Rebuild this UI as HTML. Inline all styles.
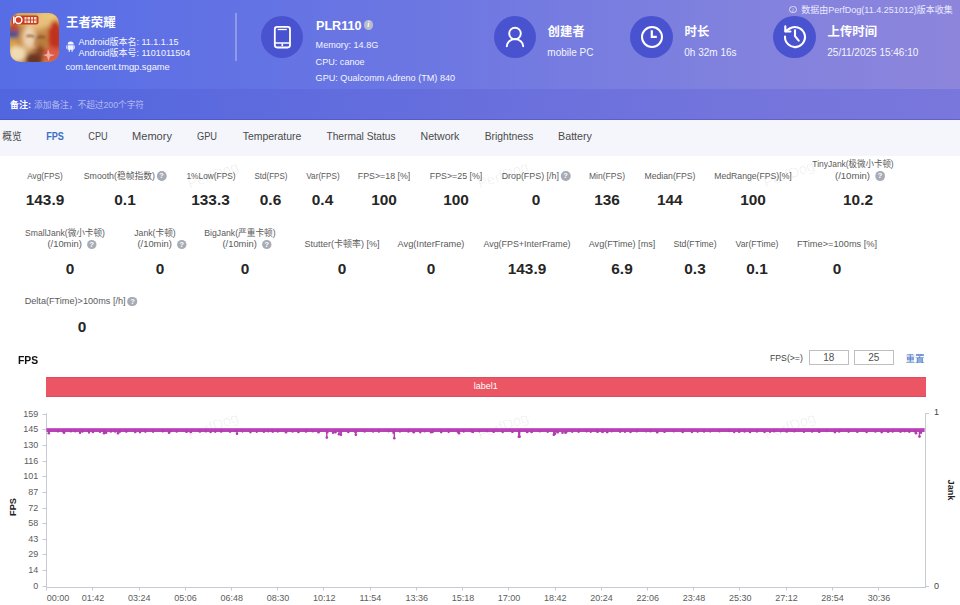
<!DOCTYPE html>
<html><head><meta charset="utf-8">
<style>
*{box-sizing:border-box;margin:0;padding:0}
html,body{width:960px;height:605px;overflow:hidden;background:#fff}
body{font-family:"Liberation Sans","Noto Sans CJK SC",sans-serif;position:relative;color:#333}
.abs{position:absolute;white-space:nowrap}
#hdr{position:absolute;left:0;top:0;width:960px;height:89px;background:linear-gradient(90deg,#566de6 0%,#6d77e2 45%,#8081de 75%,#8d85dc 100%)}
#note{position:absolute;left:0;top:89px;width:960px;height:30.5px;background:linear-gradient(90deg,#5166df 0%,#666edd 45%,#7374dc 75%,#7977dc 100%);box-shadow:inset 0 -1px 0 rgba(60,60,170,.35)}
#tabs{position:absolute;left:0;top:119.5px;width:960px;height:36.9px;background:#f5f6fb}
.t13{position:absolute;white-space:nowrap;font-size:12.4px;font-weight:bold;color:#fff;line-height:14px}
.s{position:absolute;white-space:nowrap;font-size:9px;color:#f5f6ff;line-height:10px}
.s10{position:absolute;white-space:nowrap;font-size:10px;color:#f4f5ff;line-height:11px}
.circ{position:absolute;width:42.6px;height:42.6px;border-radius:50%;background:#4a53cf;top:15.6px}
.tab{position:absolute;top:130px;font-size:10.5px;line-height:12px;color:#4a4a4a;white-space:nowrap;transform:translateX(-50%)}
.lab{position:absolute;font-size:9px;color:#5a5a5a;white-space:nowrap;transform:translateX(-50%);text-align:center;line-height:12px}
.val{position:absolute;font-size:15.4px;font-weight:bold;color:#262626;white-space:nowrap;transform:translateX(-50%);line-height:18px}
.q{display:inline-block;width:9.6px;height:9.6px;border-radius:50%;background:#a6abb5;color:#fff;font-size:7.5px;line-height:9.6px;text-align:center;font-weight:bold;vertical-align:0.5px;margin-left:2px}
.yl{position:absolute;font-size:9px;color:#5c5c5c;right:921.7px;white-space:nowrap;line-height:12px}
.xl{position:absolute;font-size:9px;color:#5c5c5c;top:592px;transform:translateX(-50%);white-space:nowrap;line-height:12px}
.inp{position:absolute;top:350px;width:39.5px;height:15px;border:1px solid #bfbfbf;background:#fff;font-size:10px;line-height:13.4px;text-align:center;color:#505050}
.wm{position:absolute;font-size:14.5px;line-height:16px;color:rgba(0,0,0,.065);white-space:nowrap;transform:translate(-50%,-50%) rotate(-20deg)}
</style></head><body>
<div id="hdr"></div>
<div id="note"></div>
<div id="tabs"></div>
<!-- app icon -->
<svg class="abs" style="left:10.3px;top:13px" width="49" height="49" viewBox="0 0 49 49">
<defs>
<clipPath id="ic"><rect x="0" y="0" width="49" height="49" rx="10.5" ry="10.5"/></clipPath>
<filter id="bl" x="-20%" y="-20%" width="140%" height="140%"><feGaussianBlur stdDeviation="2.2"/></filter>
<filter id="b1" x="-20%" y="-20%" width="140%" height="140%"><feGaussianBlur stdDeviation="1.1"/></filter>
<filter id="bs" x="-20%" y="-20%" width="140%" height="140%"><feGaussianBlur stdDeviation="0.7"/></filter>
</defs>
<g clip-path="url(#ic)">
<rect width="49" height="49" fill="#c48a48"/>
<g filter="url(#bl)">
<rect x="-4" y="-4" width="57" height="16" fill="#d8a85c"/>
<ellipse cx="38" cy="6" rx="12" ry="8" fill="#ecc878"/>
<ellipse cx="3" cy="19" rx="6" ry="8" fill="#3a4f96"/><ellipse cx="3" cy="31" rx="5" ry="6" fill="#d8a040"/>
<ellipse cx="4" cy="14" rx="5" ry="5" fill="#b84a30"/>
<ellipse cx="45" cy="24" rx="7" ry="17" fill="#c0301f"/>
<ellipse cx="24" cy="27" rx="13" ry="17" fill="#d8a266"/>
<ellipse cx="19" cy="24" rx="6" ry="11" fill="#ecd2b0"/>
<ellipse cx="31" cy="28" rx="6" ry="10" fill="#b87c3c"/>
<ellipse cx="27" cy="9" rx="14" ry="6" fill="#e6c07a"/>
<ellipse cx="24" cy="46" rx="9" ry="7" fill="#6a3420"/>
<ellipse cx="7" cy="41" rx="9" ry="8" fill="#f0dcb4"/>
<ellipse cx="42" cy="42" rx="9" ry="8" fill="#dc5a44"/>
<ellipse cx="30" cy="38" rx="5" ry="5" fill="#8a4424"/>
</g>
<g filter="url(#bs)">
</g><g filter="url(#b1)">
<path d="M16.5 23.5 Q20.5 21.5 24 24 M27.5 25 Q31 22.8 35 24.5" stroke="#6a3c1c" stroke-width="1.6" fill="none" opacity="0.8"/>
<path d="M26.5 25 L25.2 32.5" stroke="#a06c3c" stroke-width="1.3" fill="none" opacity="0.7"/>
<path d="M21.5 37 Q26 38.6 30 36.6" stroke="#8a5030" stroke-width="1.2" fill="none" opacity="0.7"/>
</g><g filter="url(#bs)">
<rect x="1.5" y="2.5" width="27" height="9" rx="2" fill="#c63a22"/>
<circle cx="8.5" cy="7" r="3.4" fill="#d8381c" stroke="#fff" stroke-width="1.5"/>
<rect x="3" y="3.5" width="1.6" height="7" fill="#fff"/>
<path d="M14.5 4 H26.5 V10 H14.5Z" fill="#fbeedc" opacity="0.9"/>
<path d="M17 4 V10 M20.5 4 V10 M23.5 4 V10 M14.5 7 H26.5" stroke="#c63a22" stroke-width="0.9"/>
<path d="M38 36 L40 41 L45 42 L40 43.5 L38.5 48 L37 43.5 L33 42 L37 41Z" fill="#fff" opacity="0.5"/>
</g>
</g>
</svg>
<div class="t13" style="left:66px;top:15.6px">王者荣耀</div>
<!-- android icon -->
<svg class="abs" style="left:66px;top:41.4px" width="9.4" height="11.5" viewBox="0 0 9 11"><path d="M1.6 3.4 A2.9 2.9 0 0 1 7.4 3.4Z M1.6 4 H7.4 V8.3 H1.6Z M0.3 4.2 H1.1 V7.3 H0.3Z M7.9 4.2 H8.7 V7.3 H7.9Z M2.6 8.3 H3.7 V10.3 H2.6Z M5.3 8.3 H6.4 V10.3 H5.3Z" fill="#f0f2ff"/></svg>
<div class="s" style="left:78.5px;top:36.5px">Android版本名: 11.1.1.15</div>
<div class="s" style="left:78.5px;top:47.5px">Android版本号: 1101011504</div>
<div class="s" style="left:65.4px;top:62.3px;font-size:9.3px">com.tencent.tmgp.sgame</div>
<div class="abs" style="left:235px;top:13px;width:1.5px;height:48px;background:rgba(255,255,255,.28)"></div>
<!-- device -->
<div class="circ" style="left:260.7px"></div>
<svg class="abs" style="left:272px;top:24px" width="20" height="26" viewBox="0 0 20 26"><rect x="2.8" y="2.8" width="15.2" height="20.7" rx="2.4" fill="none" stroke="#fff" stroke-width="1.8"/><path d="M5.7 5.5 H14.8" stroke="#fff" stroke-width="1.3"/><path d="M2.8 19 H18" stroke="#fff" stroke-width="1.5"/><rect x="9.5" y="19.6" width="1.6" height="2.6" fill="#fff"/></svg>
<div class="t13" style="left:316px;top:18.5px;font-size:12.6px">PLR110</div>
<div class="abs" style="left:363.5px;top:20px;width:9.5px;height:9.5px;border-radius:50%;background:#b9bccb;color:#fff;font-size:8px;line-height:9.5px;text-align:center;font-style:italic;font-weight:bold;font-family:'Liberation Serif',serif">i</div>
<div class="s" style="left:315.6px;top:40px;font-size:9.1px">Memory: 14.8G</div>
<div class="s" style="left:315.6px;top:56.5px;font-size:9.1px">CPU: canoe</div>
<div class="s" style="left:315.6px;top:73.2px;font-size:9.1px">GPU: Qualcomm Adreno (TM) 840</div>
<!-- creator -->
<div class="circ" style="left:493.5px"></div>
<svg class="abs" style="left:502.8px;top:24px" width="24" height="26" viewBox="0 0 24 26"><circle cx="12" cy="9.5" r="5.8" fill="none" stroke="#fff" stroke-width="1.9"/><path d="M3.8 22.3 A8.2 7.2 0 0 1 20.2 22.3" fill="none" stroke="#fff" stroke-width="1.9" stroke-linecap="round"/></svg>
<div class="t13" style="left:547.6px;top:25px">创建者</div>
<div class="s10" style="left:547.3px;top:47px">mobile PC</div>
<!-- duration -->
<div class="circ" style="left:630.3px"></div>
<svg class="abs" style="left:639.7px;top:25.1px" width="24" height="24" viewBox="0 0 24 24"><circle cx="12" cy="12" r="10" fill="none" stroke="#fff" stroke-width="2"/><path d="M11.8 5.3 V11.8 H16.8" fill="none" stroke="#fff" stroke-width="2.2"/></svg>
<div class="t13" style="left:684.6px;top:25px">时长</div>
<div class="s10" style="left:684.3px;top:47px">0h 32m 16s</div>
<!-- upload -->
<div class="circ" style="left:773.3px"></div>
<svg class="abs" style="left:781.8px;top:24.2px" width="26" height="26" viewBox="0 0 26 26"><path d="M7.2 4.9 A10 10 0 1 1 3 12.6" fill="none" stroke="#fff" stroke-width="2.1" stroke-linecap="round"/><path d="M3.3 2.2 V7.5 H8.4" fill="none" stroke="#fff" stroke-width="2.1" stroke-linecap="round" stroke-linejoin="round"/><path d="M3.6 7.2 L7.4 4.6" fill="none" stroke="#fff" stroke-width="2.1" stroke-linecap="round"/><path d="M13 6.4 V12.2 L16.7 16.7" fill="none" stroke="#fff" stroke-width="2.1" stroke-linecap="round" stroke-linejoin="round"/></svg>
<div class="t13" style="left:827.6px;top:25px">上传时间</div>
<div class="s10" style="left:827.3px;top:47px">25/11/2025 15:46:10</div>
<!-- top right -->
<div class="abs" style="left:789px;top:5.5px;width:7.5px;height:7.5px;border-radius:50%;border:0.8px solid rgba(255,255,255,.7);color:rgba(255,255,255,.8);font-size:6px;line-height:6px;text-align:center;font-style:italic;font-family:'Liberation Serif',serif">i</div>
<div class="s" style="left:801.3px;top:4.6px;font-size:9px;color:#e9eaff">数据由PerfDog(11.4.251012)版本收集</div>
<!-- note -->
<div class="s" style="left:10px;top:100.2px;font-weight:bold;color:#fff">备注:</div>
<div class="s" style="left:34px;top:100.3px;font-size:8.7px;color:rgba(255,255,255,.55)">添加备注，不超过200个字符</div>
<div class="tab" style="left:11.5px;;transform:translateX(-50%) scaleX(0.919)">概览</div>
<div class="tab" style="left:54.7px;color:#3b6fc6;font-weight:bold;transform:translateX(-50%) scaleX(0.865)">FPS</div>
<div class="tab" style="left:97.7px;;transform:translateX(-50%) scaleX(0.877)">CPU</div>
<div class="tab" style="left:152.3px;;transform:translateX(-50%) scaleX(1.053)">Memory</div>
<div class="tab" style="left:206.8px;;transform:translateX(-50%) scaleX(0.883)">GPU</div>
<div class="tab" style="left:271.7px;;transform:translateX(-50%) scaleX(0.995)">Temperature</div>
<div class="tab" style="left:360.5px;;transform:translateX(-50%) scaleX(0.972)">Thermal Status</div>
<div class="tab" style="left:439.7px;;transform:translateX(-50%) scaleX(1.008)">Network</div>
<div class="tab" style="left:508.8px;;transform:translateX(-50%) scaleX(0.980)">Brightness</div>
<div class="tab" style="left:575px;;transform:translateX(-50%) scaleX(1.021)">Battery</div><div class="lab" style="left:45px;top:169.7px;transform:translateX(-50%) scaleX(0.915)">Avg(FPS)</div>
<div class="val" style="left:45px;top:191.4px">143.9</div>
<div class="lab" style="left:125px;top:169.7px;transform:translateX(-50%) scaleX(0.976)">Smooth(稳帧指数)<span class="q">?</span></div>
<div class="val" style="left:125px;top:191.4px">0.1</div>
<div class="lab" style="left:210.5px;top:169.7px;transform:translateX(-50%) scaleX(0.925)">1%Low(FPS)</div>
<div class="val" style="left:210.5px;top:191.4px">133.3</div>
<div class="lab" style="left:270.5px;top:169.7px;transform:translateX(-50%) scaleX(0.892)">Std(FPS)</div>
<div class="val" style="left:270.5px;top:191.4px">0.6</div>
<div class="lab" style="left:322.5px;top:169.7px;transform:translateX(-50%) scaleX(0.908)">Var(FPS)</div>
<div class="val" style="left:322.5px;top:191.4px">0.4</div>
<div class="lab" style="left:384px;top:169.7px;transform:translateX(-50%) scaleX(0.981)">FPS&gt;=18 [%]</div>
<div class="val" style="left:384px;top:191.4px">100</div>
<div class="lab" style="left:456px;top:169.7px;transform:translateX(-50%) scaleX(0.981)">FPS&gt;=25 [%]</div>
<div class="val" style="left:456px;top:191.4px">100</div>
<div class="lab" style="left:535.5px;top:169.7px;transform:translateX(-50%) scaleX(0.986)">Drop(FPS) [/h]<span class="q">?</span></div>
<div class="val" style="left:536px;top:191.4px">0</div>
<div class="lab" style="left:607px;top:169.7px;transform:translateX(-50%) scaleX(0.947)">Min(FPS)</div>
<div class="val" style="left:607px;top:191.4px">136</div>
<div class="lab" style="left:669.8px;top:169.7px;transform:translateX(-50%) scaleX(0.962)">Median(FPS)</div>
<div class="val" style="left:669.8px;top:191.4px">144</div>
<div class="lab" style="left:753px;top:169.7px;transform:translateX(-50%) scaleX(0.963)">MedRange(FPS)[%]</div>
<div class="val" style="left:753px;top:191.4px">100</div>
<div class="lab" style="left:853px;top:158px;transform:translateX(-50%) scaleX(0.939)">TinyJank(极微小卡顿)</div>
<div class="lab" style="left:860px;top:169.7px;transform:translateX(-50%) scaleX(1.064)">(/10min) <span class="q">?</span></div>
<div class="val" style="left:858px;top:191.4px">10.2</div>
<div class="lab" style="left:65px;top:226.7px;transform:translateX(-50%) scaleX(0.956)">SmallJank(微小卡顿)</div>
<div class="lab" style="left:72px;top:238px;transform:translateX(-50%) scaleX(1.043)">(/10min) <span class="q">?</span></div>
<div class="val" style="left:70px;top:260.4px">0</div>
<div class="lab" style="left:155px;top:226.7px;transform:translateX(-50%) scaleX(0.963)">Jank(卡顿)</div>
<div class="lab" style="left:161.7px;top:238px;transform:translateX(-50%) scaleX(1.043)">(/10min) <span class="q">?</span></div>
<div class="val" style="left:160px;top:260.4px">0</div>
<div class="lab" style="left:240px;top:226.7px;transform:translateX(-50%) scaleX(0.964)">BigJank(严重卡顿)</div>
<div class="lab" style="left:246.7px;top:238px;transform:translateX(-50%) scaleX(1.043)">(/10min) <span class="q">?</span></div>
<div class="val" style="left:245px;top:260.4px">0</div>
<div class="lab" style="left:342px;top:238px;transform:translateX(-50%) scaleX(1.000)">Stutter(卡顿率) [%]</div>
<div class="val" style="left:342px;top:260.4px">0</div>
<div class="lab" style="left:431px;top:238px;transform:translateX(-50%) scaleX(1.023)">Avg(InterFrame)</div>
<div class="val" style="left:431px;top:260.4px">0</div>
<div class="lab" style="left:527px;top:238px;transform:translateX(-50%) scaleX(0.989)">Avg(FPS+InterFrame)</div>
<div class="val" style="left:527px;top:260.4px">143.9</div>
<div class="lab" style="left:622px;top:238px;transform:translateX(-50%) scaleX(1.008)">Avg(FTime) [ms]</div>
<div class="val" style="left:622px;top:260.4px">6.9</div>
<div class="lab" style="left:695px;top:238px;transform:translateX(-50%) scaleX(0.967)">Std(FTime)</div>
<div class="val" style="left:695px;top:260.4px">0.3</div>
<div class="lab" style="left:757px;top:238px;transform:translateX(-50%) scaleX(0.967)">Var(FTime)</div>
<div class="val" style="left:757px;top:260.4px">0.1</div>
<div class="lab" style="left:837px;top:238px;transform:translateX(-50%) scaleX(1.026)">FTime&gt;=100ms [%]</div>
<div class="val" style="left:837px;top:260.4px">0</div>
<div class="lab" style="left:81.3px;top:295.3px;transform:translateX(-50%) scaleX(1.015)">Delta(FTime)&gt;100ms [/h]<span class="q">?</span></div>
<div class="val" style="left:82px;top:318.09999999999997px">0</div><div class="wm" style="left:213px;top:175px">PerfDog</div><div class="wm" style="left:503px;top:175px">PerfDog</div><div class="wm" style="left:789px;top:174px">PerfDog</div><div class="wm" style="left:213px;top:426px">PerfDog</div><div class="wm" style="left:503px;top:426px">PerfDog</div><div class="wm" style="left:790px;top:426px">PerfDog</div>
<div class="abs" style="left:17.8px;top:354.4px;font-size:11.5px;line-height:12px;font-weight:bold;color:#111;transform:scaleX(.9);transform-origin:0 0">FPS</div>
<div class="abs" style="left:770px;top:352.5px;font-size:8.7px;line-height:11px;color:#444">FPS(&gt;=)</div>
<div class="inp" style="left:809px">18</div>
<div class="inp" style="left:854px">25</div>
<div class="abs" style="left:905.5px;top:352.5px;font-size:9.5px;line-height:11px;color:#3b6fc6">重置</div>
<div class="abs" style="left:46px;top:377.4px;width:879.5px;height:19.2px;background:#eb5564;box-shadow:inset 0 1px 0 rgba(200,70,90,.45),inset 0 -1px 0 rgba(200,70,90,.45);color:#fff;font-size:9px;line-height:19px;text-align:center">label1</div>
<div class="abs" style="left:8.3px;top:502px;font-size:9.2px;font-weight:bold;color:#222;line-height:10px;transform:rotate(-90deg);transform-origin:center;width:20px;text-align:center;margin-left:-5px">FPS</div>
<div class="abs" style="left:938.7px;top:485.2px;font-size:9.2px;font-weight:bold;color:#222;line-height:10px;transform:rotate(90deg);transform-origin:center;width:24px;text-align:center">Jank</div>
<div class="abs" style="left:934px;top:406px;font-size:9px;line-height:12px;color:#444">1</div>
<div class="abs" style="left:934px;top:579.5px;font-size:9px;line-height:12px;color:#444">0</div>
<svg class="abs" style="left:0;top:0" width="960" height="605" viewBox="0 0 960 605">
<path d="M46.5 413 V587.5 M46 587.5 H926 M925.5 413 V587.5 M925.5 413.5 H929 M925.5 586.5 H929 M42.5 414.5 H46 M42.5 429.5 H46 M42.5 445.5 H46 M42.5 461.5 H46 M42.5 476.5 H46 M42.5 492.5 H46 M42.5 508.5 H46 M42.5 523.5 H46 M42.5 539.5 H46 M42.5 554.5 H46 M42.5 570.5 H46 M42.5 586.5 H46 M46.5 587 V590.5 M92.5 587 V590.5 M139.5 587 V590.5 M185.5 587 V590.5 M231.5 587 V590.5 M277.5 587 V590.5 M323.5 587 V590.5 M370.5 587 V590.5 M416.5 587 V590.5 M462.5 587 V590.5 M508.5 587 V590.5 M555.5 587 V590.5 M601.5 587 V590.5 M647.5 587 V590.5 M693.5 587 V590.5 M739.5 587 V590.5 M786.5 587 V590.5 M832.5 587 V590.5 M878.5 587 V590.5 " stroke="#c6cad3" stroke-width="1" fill="none"/>
</svg>
<div class="yl" style="top:407.6px">159</div>
<div class="yl" style="top:423.3px">145</div>
<div class="yl" style="top:438.9px">130</div>
<div class="yl" style="top:454.6px">116</div>
<div class="yl" style="top:470.2px">101</div>
<div class="yl" style="top:485.8px">87</div>
<div class="yl" style="top:501.5px">72</div>
<div class="yl" style="top:517.1px">58</div>
<div class="yl" style="top:532.7px">43</div>
<div class="yl" style="top:548.4px">29</div>
<div class="yl" style="top:564.0px">14</div>
<div class="yl" style="top:579.6px">0</div>
<div class="xl" style="left:58.1px">00:00</div>
<div class="xl" style="left:93.1px">01:42</div>
<div class="xl" style="left:139.3px">03:24</div>
<div class="xl" style="left:185.6px">05:06</div>
<div class="xl" style="left:231.8px">06:48</div>
<div class="xl" style="left:278.0px">08:30</div>
<div class="xl" style="left:324.2px">10:12</div>
<div class="xl" style="left:370.4px">11:54</div>
<div class="xl" style="left:416.7px">13:36</div>
<div class="xl" style="left:462.9px">15:18</div>
<div class="xl" style="left:509.1px">17:00</div>
<div class="xl" style="left:555.3px">18:42</div>
<div class="xl" style="left:601.5px">20:24</div>
<div class="xl" style="left:647.8px">22:06</div>
<div class="xl" style="left:694.0px">23:48</div>
<div class="xl" style="left:740.2px">25:30</div>
<div class="xl" style="left:786.4px">27:12</div>
<div class="xl" style="left:832.6px">28:54</div>
<div class="xl" style="left:878.9px">30:36</div><svg class="abs" style="left:0;top:0" width="960" height="605" viewBox="0 0 960 605">
<path d="M46.5 430.1 H924.6" stroke="#b842b5" stroke-width="3.7" fill="none"/>
<path d="M46.5 428.5 H924.6" stroke="#c75ac3" stroke-width="0.8" fill="none"/>
<path d="M48.8 430.0 V433.7 M104.0 430.0 V433.7 M118.0 430.0 V433.7 M237.0 430.0 V434.2 M326.8 430.0 V438.0 M339.0 430.0 V434.7 M341.0 430.0 V435.2 M355.8 430.0 V435.2 M394.3 430.0 V438.7 M459.0 430.0 V433.7 M518.8 430.0 V437.2 M519.6 430.0 V437.2 M553.8 430.0 V435.2 M555.0 430.0 V434.2 M916.0 430.0 V433.7 M919.5 430.0 V437.0 " stroke="#b23bb0" stroke-width="1.4" fill="none"/>
<g fill="#b23bb0"><circle cx="48.8" cy="433.3" r="1.3"/><circle cx="57.9" cy="431.2" r="1.2"/><circle cx="62.8" cy="431.1" r="1.3"/><circle cx="64.0" cy="432.7" r="1.4"/><circle cx="70.8" cy="431.3" r="1.3"/><circle cx="75.2" cy="431.2" r="1.2"/><circle cx="80.0" cy="432.7" r="1.3"/><circle cx="82.4" cy="431.5" r="1.3"/><circle cx="88.6" cy="431.1" r="1.4"/><circle cx="89.0" cy="432.7" r="1.1"/><circle cx="92.9" cy="432.0" r="1.3"/><circle cx="100.0" cy="431.7" r="1.2"/><circle cx="104.0" cy="433.3" r="1.3"/><circle cx="104.2" cy="431.2" r="1.2"/><circle cx="106.0" cy="432.7" r="1.4"/><circle cx="110.8" cy="431.4" r="1.3"/><circle cx="115.2" cy="431.4" r="1.3"/><circle cx="118.0" cy="433.3" r="1.3"/><circle cx="119.8" cy="431.5" r="1.4"/><circle cx="126.3" cy="431.2" r="1.5"/><circle cx="135.3" cy="431.9" r="1.3"/><circle cx="140.0" cy="432.1" r="1.3"/><circle cx="145.4" cy="431.6" r="1.3"/><circle cx="153.1" cy="431.6" r="1.3"/><circle cx="162.8" cy="431.2" r="1.4"/><circle cx="169.0" cy="432.7" r="1.3"/><circle cx="170.3" cy="431.2" r="1.3"/><circle cx="176.7" cy="431.4" r="1.3"/><circle cx="186.5" cy="431.4" r="1.5"/><circle cx="190.8" cy="431.9" r="1.4"/><circle cx="200.0" cy="431.3" r="1.5"/><circle cx="205.7" cy="431.1" r="1.5"/><circle cx="210.6" cy="432.1" r="1.2"/><circle cx="215.3" cy="431.6" r="1.3"/><circle cx="221.1" cy="431.2" r="1.5"/><circle cx="230.0" cy="431.6" r="1.4"/><circle cx="235.1" cy="431.1" r="1.2"/><circle cx="237.0" cy="433.8" r="1.3"/><circle cx="242.6" cy="431.6" r="1.1"/><circle cx="250.4" cy="432.1" r="1.3"/><circle cx="256.7" cy="432.0" r="1.1"/><circle cx="263.9" cy="431.8" r="1.2"/><circle cx="268.3" cy="431.4" r="1.1"/><circle cx="272.7" cy="431.5" r="1.4"/><circle cx="277.9" cy="431.3" r="1.4"/><circle cx="286.0" cy="431.9" r="1.5"/><circle cx="292.6" cy="431.6" r="1.2"/><circle cx="298.4" cy="431.9" r="1.4"/><circle cx="306.0" cy="431.4" r="1.4"/><circle cx="312.7" cy="431.3" r="1.2"/><circle cx="318.5" cy="431.9" r="1.5"/><circle cx="326.8" cy="437.6" r="1.3"/><circle cx="327.2" cy="432.1" r="1.5"/><circle cx="333.0" cy="432.7" r="1.2"/><circle cx="335.4" cy="432.0" r="1.5"/><circle cx="339.0" cy="434.3" r="1.3"/><circle cx="340.9" cy="431.9" r="1.3"/><circle cx="341.0" cy="434.8" r="1.3"/><circle cx="348.3" cy="431.9" r="1.3"/><circle cx="355.5" cy="431.8" r="1.5"/><circle cx="355.8" cy="434.8" r="1.3"/><circle cx="364.7" cy="431.3" r="1.4"/><circle cx="373.1" cy="431.6" r="1.2"/><circle cx="378.9" cy="431.5" r="1.3"/><circle cx="388.7" cy="431.1" r="1.3"/><circle cx="393.4" cy="431.1" r="1.2"/><circle cx="393.5" cy="432.7" r="1.2"/><circle cx="394.3" cy="438.3" r="1.3"/><circle cx="399.9" cy="431.4" r="1.2"/><circle cx="408.5" cy="431.4" r="1.4"/><circle cx="413.4" cy="431.8" r="1.1"/><circle cx="413.8" cy="432.2" r="1.3"/><circle cx="420.3" cy="432.1" r="1.3"/><circle cx="424.6" cy="431.5" r="1.1"/><circle cx="431.0" cy="432.2" r="1.2"/><circle cx="432.6" cy="432.0" r="1.3"/><circle cx="441.2" cy="432.1" r="1.3"/><circle cx="448.6" cy="432.1" r="1.1"/><circle cx="457.9" cy="431.5" r="1.5"/><circle cx="459.0" cy="433.3" r="1.3"/><circle cx="463.7" cy="431.3" r="1.4"/><circle cx="471.9" cy="431.3" r="1.5"/><circle cx="473.0" cy="432.2" r="1.1"/><circle cx="479.5" cy="431.3" r="1.2"/><circle cx="487.0" cy="431.3" r="1.1"/><circle cx="493.7" cy="431.7" r="1.4"/><circle cx="502.7" cy="432.0" r="1.2"/><circle cx="512.4" cy="431.9" r="1.2"/><circle cx="518.8" cy="436.8" r="1.3"/><circle cx="519.2" cy="431.6" r="1.3"/><circle cx="519.6" cy="436.8" r="1.3"/><circle cx="527.2" cy="431.8" r="1.5"/><circle cx="531.6" cy="431.9" r="1.4"/><circle cx="539.8" cy="431.2" r="1.2"/><circle cx="547.7" cy="431.8" r="1.2"/><circle cx="553.8" cy="434.8" r="1.3"/><circle cx="555.0" cy="433.8" r="1.3"/><circle cx="557.6" cy="432.0" r="1.5"/><circle cx="562.5" cy="432.7" r="1.3"/><circle cx="565.5" cy="432.7" r="1.4"/><circle cx="566.6" cy="431.9" r="1.1"/><circle cx="572.3" cy="431.9" r="1.1"/><circle cx="578.6" cy="431.6" r="1.4"/><circle cx="586.6" cy="431.3" r="1.3"/><circle cx="590.7" cy="431.9" r="1.1"/><circle cx="597.5" cy="431.4" r="1.5"/><circle cx="602.5" cy="431.9" r="1.4"/><circle cx="607.2" cy="432.1" r="1.4"/><circle cx="611.6" cy="431.5" r="1.1"/><circle cx="620.2" cy="431.5" r="1.4"/><circle cx="625.0" cy="432.0" r="1.1"/><circle cx="630.5" cy="431.8" r="1.4"/><circle cx="636.8" cy="431.3" r="1.3"/><circle cx="646.0" cy="431.2" r="1.2"/><circle cx="650.5" cy="431.3" r="1.3"/><circle cx="657.2" cy="432.0" r="1.5"/><circle cx="664.5" cy="431.9" r="1.2"/><circle cx="673.8" cy="431.2" r="1.2"/><circle cx="682.7" cy="431.9" r="1.3"/><circle cx="691.9" cy="432.1" r="1.2"/><circle cx="697.6" cy="431.8" r="1.1"/><circle cx="704.1" cy="431.5" r="1.2"/><circle cx="710.2" cy="431.6" r="1.1"/><circle cx="719.5" cy="431.2" r="1.2"/><circle cx="729.3" cy="431.1" r="1.2"/><circle cx="734.2" cy="432.1" r="1.2"/><circle cx="739.2" cy="431.7" r="1.4"/><circle cx="744.6" cy="431.6" r="1.2"/><circle cx="750.0" cy="432.0" r="1.3"/><circle cx="756.9" cy="431.5" r="1.2"/><circle cx="764.5" cy="432.0" r="1.2"/><circle cx="770.0" cy="431.9" r="1.1"/><circle cx="774.1" cy="431.3" r="1.2"/><circle cx="780.6" cy="431.4" r="1.1"/><circle cx="786.8" cy="431.4" r="1.4"/><circle cx="794.2" cy="431.3" r="1.3"/><circle cx="803.9" cy="431.7" r="1.2"/><circle cx="812.1" cy="431.4" r="1.3"/><circle cx="819.2" cy="431.5" r="1.5"/><circle cx="826.9" cy="431.2" r="1.1"/><circle cx="834.9" cy="432.0" r="1.4"/><circle cx="839.2" cy="431.5" r="1.3"/><circle cx="848.6" cy="431.6" r="1.3"/><circle cx="857.3" cy="431.7" r="1.4"/><circle cx="866.6" cy="432.0" r="1.3"/><circle cx="875.4" cy="431.5" r="1.3"/><circle cx="881.7" cy="432.0" r="1.4"/><circle cx="888.1" cy="431.6" r="1.5"/><circle cx="892.7" cy="431.6" r="1.2"/><circle cx="900.5" cy="431.6" r="1.4"/><circle cx="904.9" cy="431.1" r="1.4"/><circle cx="909.3" cy="431.5" r="1.4"/><circle cx="914.6" cy="431.3" r="1.3"/><circle cx="916.0" cy="433.3" r="1.3"/><circle cx="919.5" cy="436.6" r="1.3"/><circle cx="921.0" cy="432.7" r="1.2"/></g>
</svg></body></html>
